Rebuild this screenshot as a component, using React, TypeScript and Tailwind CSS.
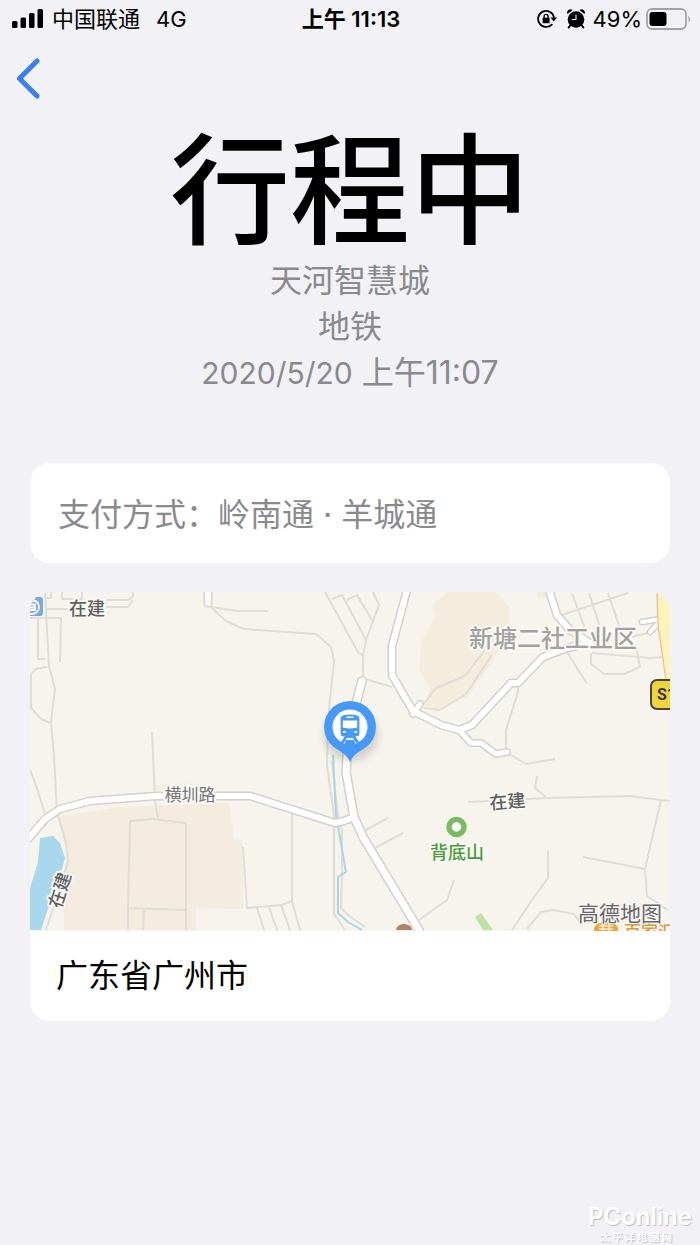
import type { ReactNode } from "react";

type TRoad = {
  d: string;
  width?: number;
};

type TLabel = {
  text: string;
  x: number;
  y: number;
  size: number;
  color: string;
  rotate?: number;
  bold?: boolean;
};

const lanes: Array<string> = [
  "M45 592L47 629L49 666L55 689L51 722L54 757L57 812L66 842L68 862L56 900L46 930",
  "M30 618H61L60 662M38 619V659H46M46 609H68",
  "M45 598H51V592M62 592V599H82V592M106 600H129L133 596V592M106 607H128L133 600",
  "M47 667L36 669L31 674V708L41 719L50 723",
  "M152 732L155 801L158 819",
  "M30 770L36 785L45 814",
  "M211 607L238 611H268",
  "M211 607L226 621L244 629L316 634L331 647L334 661L328 720L327 765L334 815V914L345 930",
  "M325 592L358 652L363 656M332 599L342 595L366 640M347 600L357 595L372 620M373 592L379 605L366 640L363 656V677",
  "M365 679L392 687",
  "M421 707L436 688L465 676L485 650M424 708L440 710L466 694L492 655",
  "M518 683V692L506 730V752L526 764L555 759",
  "M567 652L587 684",
  "M562 615L628 593M572 593L586 632M589 593L602 634M608 593L622 634",
  "M592 653L650 658L666 657M591 653V664L604 674H624L640 667L636 646M632 637L655 631",
  "M468 802L547 798L630 796L661 800L670 801",
  "M547 798L535 788L537 776",
  "M661 800L645 869L583 857M645 869L647 896L668 910",
  "M548 851V878L532 900L512 930M527 929L541 912L553 910L574 914L582 925",
  "M454 880L447 900L419 920",
  "M130 821L152 819L186 823V930M130 821L128 908L186 910M128 908V930M144 909L143 930",
  "M292 812V901L281 905L247 908L243 847M292 901L300 930M281 905L290 930M269 907L277 930M257 908L264 930",
  "M364 831L388 818M375 848L403 833",
  "M332 761L338 817L342 830V874L341 908L349 916L365 927",
];

const roads: Array<TRoad> = [
  { d: "M28 839L45 819L60 809L90 801L156 796L250 796L335 823L344 821L354 817", width: 6 },
  { d: "M362 681L349 730L346 772L354 817L363 837L419 930", width: 7 },
  { d: "M407 590L392 646V675L413 711L441 725L459 730L472 725L511 683H518L543 657L567 648L590 643", width: 6 },
  { d: "M413 714L420 704", width: 5 },
  { d: "M459 730L471 743H481L496 754L507 752", width: 5 },
  { d: "M549 590L557 615L570 630L590 643", width: 6 },
  { d: "M208 590V603", width: 6 },
  { d: "M642 622L662 619L650 632", width: 4 },
];

const labels: Array<TLabel> = [
  { text: "在建", x: 87, y: 615, size: 18, color: "#5f5f62", bold: true },
  { text: "新塘二社工业区", x: 553, y: 647, size: 24, color: "#a1a1a1", bold: true },
  { text: "横圳路", x: 190, y: 801, size: 17, color: "#77777a" },
  { text: "在建", x: 508, y: 808, size: 18, color: "#5f5f62", rotate: -5, bold: true },
  { text: "在建", x: 66, y: 892, size: 18, color: "#5f5f62", rotate: -73, bold: true },
  { text: "背底山", x: 457, y: 859, size: 18, color: "#499b3d", bold: true },
];

function SignalIcon() {
  return (
    <svg viewBox="0 0 32 20" className="w-8 h-5" aria-hidden="true">
      <rect x="0" y="12" width="5.5" height="7" rx="1.5" />
      <rect x="8.5" y="8.5" width="5.5" height="10.5" rx="1.5" />
      <rect x="17" y="4" width="5.5" height="15" rx="1.5" />
      <rect x="25.5" y="0" width="5.5" height="19" rx="1.5" />
    </svg>
  );
}

function LockIcon() {
  return (
    <svg viewBox="0 0 20 18" className="w-5 h-[18px]" fill="none" stroke="black" aria-hidden="true">
      <path d="M14.8 14.6A8 8 0 1 1 16.9 7" strokeWidth="1.8" strokeLinecap="round" />
      <path d="M13.4 7.400H20L16.800 11.600Z" fill="black" stroke="none" />
      <rect x="5.600" y="7.800" width="7" height="5.400" rx="0.600" fill="black" stroke="none" />
      <path d="M7.100 8V6.400a2 2 0 0 1 4 0V8" strokeWidth="1.400" />
    </svg>
  );
}

function AlarmIcon() {
  return (
    <svg viewBox="0 0 18 20" className="w-[18px] h-5" aria-hidden="true">
      <circle cx="9" cy="10.5" r="8.300" />
      <path d="M0.500 5A3.200 3.200 0 0 1 5.500 1.200ZM12.500 1.200A3.200 3.200 0 0 1 17.500 5Z" />
      <path d="M3.500 16L1.600 18.600M14.500 16L16.400 18.600" stroke="black" strokeWidth="1.800" strokeLinecap="round" />
      <path d="M9 5.500V10.500H4.800" stroke="#f2f1f6" strokeWidth="1.100" fill="none" />
    </svg>
  );
}

function BatteryIcon() {
  return (
    <svg viewBox="0 0 44 22" className="w-11 h-[22px]" aria-hidden="true">
      <rect x="1" y="1" width="39" height="20" rx="5" fill="none" stroke="#a3a3a7" strokeWidth="1.8" />
      <rect x="3.5" y="4" width="17" height="14" rx="3" />
      <path d="M42.5 7.5V14.5Q44 13 44 11T42.5 7.5Z" fill="#a3a3a7" />
    </svg>
  );
}

function StatusBar() {
  return (
    <div className="grid grid-cols-[1fr_auto_1fr] items-center h-[38px] pl-3 pr-2.5 text-[22px] leading-[38px]">
      <div className="flex items-center">
        <SignalIcon />
        <span className="ml-2">中国联通</span>
        <span className="ml-4">4G</span>
      </div>
      <div className="font-semibold">上午 11:13</div>
      <div className="flex items-center justify-end">
        <LockIcon />
        <span className="ml-2.5">
          <AlarmIcon />
        </span>
        <span className="ml-2 mr-1">49%</span>
        <BatteryIcon />
      </div>
    </div>
  );
}

function MapPin() {
  return (
    <g>
      <ellipse cx="351" cy="735" rx="27" ry="26" fill="#000000" opacity="0.15" filter="url(#pin-shadow)" />
      <path d="M350 762Q347 755 339 750.5A26 26 0 1 1 361 750.5Q353 755 350 762Z" fill="#4799f7" />
      <circle cx="350" cy="727" r="17.5" fill="#ffffff" />
      <g fill="#4799f7">
        <path d="M340.600 718Q340.600 714.500 350 714.500T359.400 718V733Q359.400 736.500 356 736.500H344Q340.600 736.500 340.600 733Z" />
        <path d="M345 736L340.500 743H344L347 738H353L356 743H359.500L355 736Z" />
        <path d="M346 740H354L356 746H344Z" />
      </g>
      <path d="M346.5 717.3H353.5" stroke="#ffffff" strokeWidth="1.4" />
      <path d="M342.800 720.400H357.200V727.500Q350 729.500 342.800 727.500Z" fill="#ffffff" />
      <ellipse cx="344.3" cy="732" rx="1.7" ry="1.1" fill="#ffffff" />
      <ellipse cx="355.7" cy="732" rx="1.7" ry="1.1" fill="#ffffff" />
    </g>
  );
}

function TripMap() {
  return (
    <svg
      viewBox="30 592 640 339"
      className="block w-full h-auto bg-[#f7f4ed]"
      role="img"
      aria-label="天河智慧城地图"
      fontFamily='"Noto Sans CJK SC", sans-serif'
    >
      <defs>
        <filter id="pin-shadow" x="-30%" y="-30%" width="160%" height="160%">
          <feGaussianBlur stdDeviation="4" />
        </filter>
      </defs>

      <path d="M57 817L118 807L229 803L234 839L243 840V909L196 908V930H64V880L66 850Z" fill="#f4eddf" />
      <path d="M154 785L192 783V790H155Z" fill="#f2eee0" />
      <path d="M448 592H496L509 606V625L494 660L468 696L437 712L424 705L430 688L419 670L422 640L436 614L433 605Z" fill="#f4ecdd" />
      <path d="M537 592H549L548 598L537 597Z" fill="#f4ecdd" />
      <path d="M40 838L53 836L60 843L65 858L59 880L47 912L41 930H30V888L38 862Z" fill="#a9d8ee" />

      <g fill="none" stroke="#deddd8" strokeWidth="2" strokeLinejoin="round">
        {
          lanes.map(lane => <path key={lane} d={lane} />)
        }
      </g>
      <path d="M333 755L336 815L346 872L338 877V913L348 922L362 930" fill="none" stroke="#a8d5e8" strokeWidth="2" />

      <g fill="none" stroke="#d3d1ce" strokeLinejoin="round" strokeLinecap="round">
        {
          roads.map(road => <path key={road.d} d={road.d} strokeWidth={(road.width ?? 6) + 3} />)
        }
      </g>
      <g fill="none" stroke="#ffffff" strokeLinejoin="round" strokeLinecap="round">
        {
          roads.map(road => <path key={road.d} d={road.d} strokeWidth={road.width ?? 6} />)
        }
      </g>

      <path d="M657 592L658 625L666 680H670V592Z" fill="#fcf4bb" />
      <path d="M657 592L658 625L666 680" fill="none" stroke="#efc39a" strokeWidth="1.5" />
      <path d="M475 917L481 913L493 930H483Z" fill="#bfe3a7" />
      <path d="M396 930A8 6 0 0 1 412 930Z" fill="#ab8565" />

      <rect x="20" y="597" width="23" height="19" rx="3" fill="#7ba7e6" />
      <path d="M30 600Q39 600 39 607T30 614M30 604.500H35V610H30M30 607.500H35" fill="none" stroke="#ffffff" strokeWidth="1.8" />

      <rect x="651" y="680" width="40" height="29" rx="6" fill="#efd53c" stroke="#4a4538" strokeWidth="2" />
      <text x="657" y="700" fontSize="16" fontWeight="700" fontFamily="Roboto, sans-serif" fill="#383530">S1</text>

      <circle cx="456.5" cy="827" r="7.5" fill="#ffffff" stroke="#7abb61" strokeWidth="5.5" />

      <g textAnchor="middle" stroke="#faf8f3" strokeWidth="4" strokeLinejoin="round" paintOrder="stroke">
        {
          labels.map(label => (
            <text
              key={`${label.text}-${label.x}`}
              x={label.x}
              y={label.y}
              fontSize={label.size}
              fontWeight={label.bold ? 500 : 400}
              fill={label.color}
              transform={label.rotate ? `rotate(${label.rotate} ${label.x} ${label.y})` : undefined}
            >
              {label.text}
            </text>
          ))
        }
      </g>

      <path d="M594 931Q594 923 601 923L606 918L611 923Q618 923 618 931Z" fill="#e6a944" />
      <path d="M599 926H613M599 929H613M603 924V931M609 924V931" stroke="#fbe9c7" strokeWidth="1.5" />
      <text x="624" y="938" fontSize="17" fontWeight="500" fill="#dc9a45">百家汇</text>
      <text x="578" y="921" fontSize="21" fill="#66666a" stroke="#faf8f3" strokeWidth="2" paintOrder="stroke">高德地图</text>

      <MapPin />
    </svg>
  );
}

function Card({ children }: { children: ReactNode }) {
  return <section className="bg-white rounded-[20px] overflow-hidden">{children}</section>;
}

function Watermark() {
  return (
    <footer className="mt-auto self-end pr-2 pb-0.5 text-right text-white [text-shadow:1px_1px_1px_#bdbdc4]">
      <p className="text-[24px] leading-7 font-semibold">PConline</p>
      <p className="pr-2 text-[10px] leading-3 font-bold text-center">太 平 洋 电 脑 网</p>
    </footer>
  );
}

export default function App() {
  return (
    <div className="min-h-screen flex flex-col bg-[#f2f1f6] text-black font-[Inter,'Noto_Sans_CJK_SC',sans-serif]">
      <StatusBar />

      <nav className="px-4 pt-[18px]">
        <button type="button" aria-label="返回" className="block">
          <svg viewBox="0 0 24 44" className="w-6 h-11" fill="none" stroke="#397ff2" strokeWidth="5" strokeLinecap="round" strokeLinejoin="round">
            <path d="M21 5L3.500 22.500L21 40" />
          </svg>
        </button>
      </nav>

      <header className="pt-[26px] text-center">
        <h1 className="text-[120px] leading-[132px] font-medium">行程中</h1>
        <div className="text-[32px] leading-[46px] text-[#8a8a8e]">
          <p>天河智慧城</p>
          <p>地铁</p>
          <p><span className="text-[30px]">2020/5/20</span> 上午11:07</p>
        </div>
      </header>

      <main className="flex flex-col gap-[29px] px-[30px] pt-[67px]">
        <Card>
          <p className="px-7 pt-7 pb-6 text-[32px] leading-[48px] text-[#8a8a8e]">支付方式：岭南通 · 羊城通</p>
        </Card>
        <Card>
          <TripMap />
          <p className="px-[26px] py-[21px] text-[32px] leading-[48px]">广东省广州市</p>
        </Card>
      </main>

      <Watermark />
    </div>
  );
}
